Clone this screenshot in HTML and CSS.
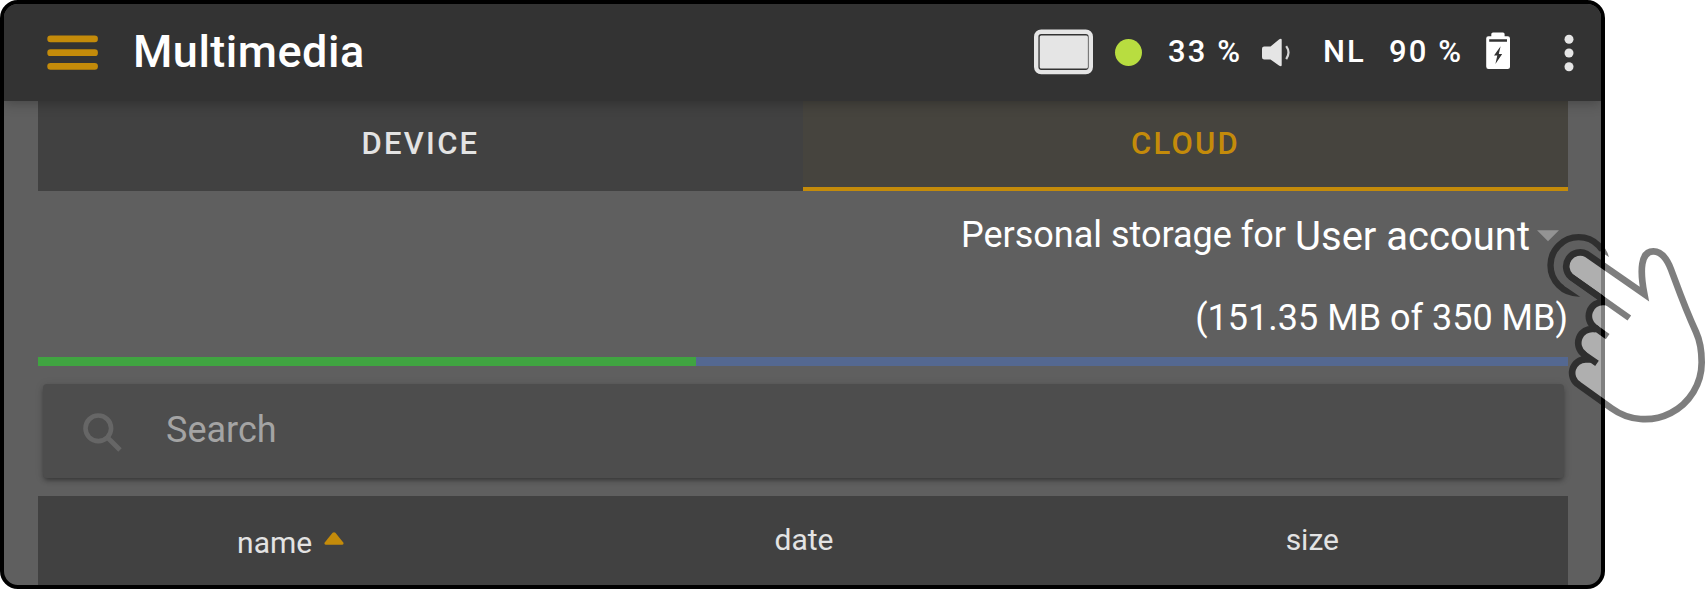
FILE: index.html
```html
<!DOCTYPE html>
<html lang="en">
<head>
<meta charset="utf-8">
<title>Multimedia</title>
<link rel="stylesheet" href="styles.css">
</head>
<body>
<div class="device">
  <header class="appbar">
    <svg class="menu" width="52" height="36" viewBox="0 0 52 36"><g fill="#c48b0a"><rect x="0.3" y="0.5" width="50.6" height="6.8" rx="3.2"/><rect x="0.3" y="14.3" width="50.6" height="6.8" rx="3.2"/><rect x="0.3" y="28" width="50.6" height="6.8" rx="3.2"/></g></svg>
    <h1 class="title">Multimedia</h1>
    <div class="status">
      <svg class="screen" width="60" height="46" viewBox="0 0 60 46"><rect x="2.2" y="2.7" width="54.6" height="40.4" rx="5" fill="none" stroke="#e5e5e5" stroke-width="4.4"/><rect x="5.7" y="6.6" width="48.2" height="33" rx="1.5" fill="#e5e5e5"/></svg>
      <span class="dot"></span>
      <span class="reading">33 %</span>
      <svg class="speaker" width="30" height="30" viewBox="0 0 30 30"><path fill="#e5e5e5" d="M2.2 8.5H8.5L17.3 1.2Q19.7 0 19.7 2V27Q19.7 29 17.3 27.8L8.5 21.5H2.2Q0 21.5 0 19.3V10.7Q0 8.5 2.2 8.5Z"/><path d="M24.2 8.2Q28.8 14.5 24.2 21.2" fill="none" stroke="#d5d5d5" stroke-width="2.2"/></svg>
      <span class="lang">NL</span>
      <span class="reading">90 %</span>
      <svg class="battery" width="25" height="38" viewBox="0 0 25 38"><path fill="#fff" d="M7 .5H17Q18.6 .5 18.6 2.1V4.2H21.8Q24 4.2 24 6.4V34.5Q24 37 21.5 37H2.6Q.2 37 .2 34.5V6.4Q.2 4.2 2.4 4.2H5.3V2.1Q5.3 .5 7 .5Z"/><path fill="#333" d="M3.2 7.2H21V9.8H3.2ZM14.6 14.3L8 23.4H11.3L9.4 32L16.2 22H12.8Z"/></svg>
      <svg class="more" width="10" height="38" viewBox="0 0 10 38"><g fill="#e5e5e5"><circle cx="5" cy="5.2" r="4.5"/><circle cx="5" cy="19" r="4.5"/><circle cx="5" cy="32.8" r="4.5"/></g></svg>
    </div>
  </header>
  <main class="content">
    <nav class="tabs">
      <div class="tab">DEVICE</div>
      <div class="tab active">CLOUD</div>
    </nav>
    <div class="account">
      <span class="label">Personal storage for</span>
      <span class="user">User account</span>
      <svg class="caret" width="22" height="12" viewBox="0 0 22 12"><path d="M0 .3H22L11 11.3Z" fill="#939393"/></svg>
    </div>
    <div class="quota">(151.35 MB of 350 MB)</div>
    <div class="bar"><div class="used" style="width:43%"></div></div>
    <div class="search">
      <svg class="glass" width="40" height="40" viewBox="0 0 40 40"><circle cx="15.3" cy="15.3" r="12.8" fill="none" stroke="#666" stroke-width="4.6"/><path d="M24.2 24.2L37 37" stroke="#666" stroke-width="4.8"/></svg>
      <span>Search</span>
    </div>
    <div class="columns">
      <div class="col sorted">name<svg class="sort" width="20" height="13" viewBox="0 0 20 13"><path d="M8.6 .8Q10 -.5 11.4 .8L19.3 10.5Q20 12.5 18 12.7H2Q0 12.5 .7 10.5Z" fill="#c48b0a"/></svg></div>
      <div class="col">date</div>
      <div class="col">size</div>
    </div>
  </main>
</div>
<svg class="hand" width="405" height="250" viewBox="0 0 1215 750">
  <clipPath id="ripple"><path d="M792 287L860 334L600 400V50H1000L975 234L900 183Z"/></clipPath>
  <g opacity=".5">
    <circle cx="836" cy="226" r="84.5" fill="none" stroke="#000" stroke-width="19" clip-path="url(#ripple)"/>
    <path fill="#fff" stroke="#000" stroke-width="20" d="M860 192L1033 312C1019 240 1022 184 1060 184C1086 184 1103 212 1113 238C1136 300 1155 355 1188 426C1200 452 1205 485 1205 517A170 170 0 0 1 935 655L836 584A41 41 0 0 1 858 508L851 492A42 42 0 0 1 881 417L884 412A42 42 0 0 1 911 336L900 322L812 260A42 42 0 0 1 860 192Z"/>
    <path fill="none" stroke="#000" stroke-width="19" d="M812 260L988 384M884 412L923 440M851 492L891 520"/>
  </g>
</svg>
</body>
</html>
```
FILE: styles.css
```css
* { box-sizing: border-box; }
body {
  margin: 0;
  width: 1705px;
  height: 589px;
  overflow: hidden;
  position: relative;
  background: #fff;
  font-family: Roboto, "Liberation Sans", sans-serif;
  color: #fff;
}
svg { display: block; flex: none; }
.device {
  width: 1605px;
  height: 589px;
  border: 4px solid #000;
  border-radius: 18px;
  background: #5f5f5f;
  overflow: hidden;
}
.appbar {
  position: relative;
  z-index: 1;
  height: 97px;
  display: flex;
  align-items: center;
  padding: 0 27px 0 43px;
  background: #333;
  box-shadow: 0 2px 12px rgba(0, 0, 0, .28);
}
.title {
  margin: 0 0 0 34px;
  font-size: 45px;
  line-height: 96px;
  padding-bottom: 1px;
  font-weight: 500;
  letter-spacing: .5px;
}
.status {
  margin-left: auto;
  display: flex;
  align-items: center;
  font-size: 31px;
  font-weight: 500;
  letter-spacing: 2.1px;
  line-height: 36px;
  white-space: nowrap;
}
.screen { margin-bottom: 1px; }
.dot {
  width: 27px;
  height: 27px;
  margin: 0 26px 0 21px;
  border-radius: 50%;
  background: #b8dd40;
}
.reading { width: 76px; padding-bottom: 1px; }
.lang { width: 66px; padding-bottom: 1px; }
.speaker { margin: 0 31px 0 18px; }
.battery { margin: 0 53px 4px 21px; }
.content { padding: 0 33px 0 34px; }
.tabs { display: flex; height: 90px; }
.tab {
  flex: 1;
  text-align: center;
  line-height: 86px;
  font-size: 31px;
  font-weight: 500;
  letter-spacing: 2.25px;
  color: #e3e3e3;
  background: #414141;
}
.tab.active {
  color: #c48b0a;
  background: #46443e;
  border-bottom: 4px solid #c48b0a;
}
.account {
  height: 88px;
  display: flex;
  align-items: center;
  justify-content: flex-end;
  gap: 9px;
  padding-right: 9px;
  font-size: 36px;
}
.user { font-size: 40px; padding-top: 3px; }
.caret { margin: 1px 0 0 -2px; }
.quota {
  height: 78px;
  line-height: 79px;
  font-size: 36px;
  text-align: right;
}
.bar { height: 9px; background: #546891; }
.used { height: 9px; background: #40a441; }
.search {
  height: 94px;
  margin: 18px 4px 18px 5px;
  padding-left: 40px;
  display: flex;
  align-items: center;
  gap: 43px;
  border-radius: 4px;
  background: #4d4d4d;
  box-shadow: 0 3px 5px -1px rgba(0, 0, 0, .4), 0 1px 10px rgba(0, 0, 0, .1);
  font-size: 36px;
  color: #a4a4a4;
}
.search span { padding-bottom: 2px; }
.glass { margin-top: 3px; }
.columns {
  display: flex;
  height: 89px;
  background: #414141;
  color: #e3e3e3;
  font-size: 30px;
}
.col {
  flex: 1;
  display: flex;
  align-items: center;
  justify-content: center;
  padding: 0 3px 2px 0;
}
.sorted { padding: 4px 8px 0 0; }
.sort { margin: 0 0 9px 12px; }
.hand { position: absolute; left: 1300px; top: 190px; }
```
